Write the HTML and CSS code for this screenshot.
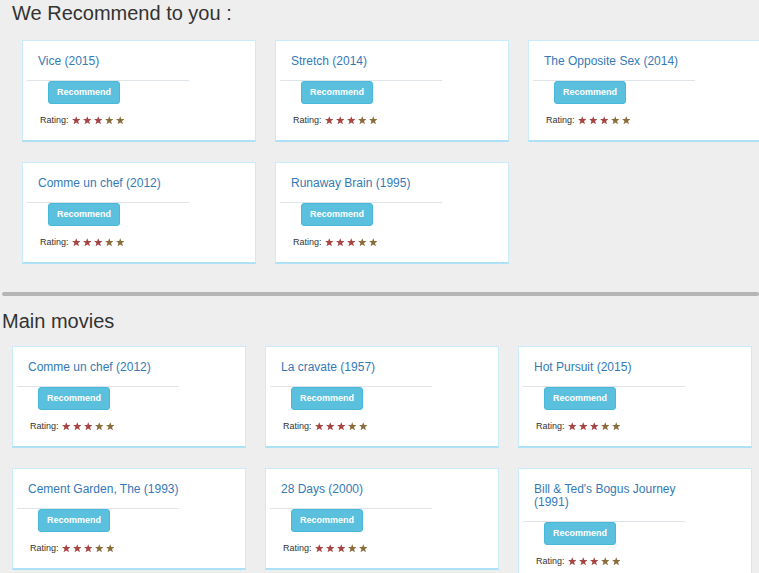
FILE: index.html
```html
<!DOCTYPE html>
<html lang="en">
<head>
<meta charset="utf-8">
<title>Movies</title>
<link rel="stylesheet" href="styles.css">
</head>
<body>
<svg width="0" height="0" class="defs" aria-hidden="true">
  <defs>
    <symbol id="star" viewBox="0 0 10 10">
      <polygon points="5,0.2 6.3,3.5 9.9,3.6 7.1,5.9 8.2,9.7 5,7.6 1.8,9.7 2.9,5.9 0.1,3.6 3.7,3.5"/>
    </symbol>
  </defs>
</svg>

<section class="recs">
  <h2 class="heading">We Recommend to you :</h2>
  <div class="grid">
    <div class="card">
      <h5 class="title">Vice (2015)</h5>
      <hr class="sep">
      <button class="btn">Recommend</button>
      <div class="rating">Rating: <span class="stars"><svg class="s red"><use href="#star"/></svg><svg class="s red"><use href="#star"/></svg><svg class="s red"><use href="#star"/></svg><svg class="s brown"><use href="#star"/></svg><svg class="s brown"><use href="#star"/></svg></span></div>
    </div>
    <div class="card">
      <h5 class="title">Stretch (2014)</h5>
      <hr class="sep">
      <button class="btn">Recommend</button>
      <div class="rating">Rating: <span class="stars"><svg class="s red"><use href="#star"/></svg><svg class="s red"><use href="#star"/></svg><svg class="s red"><use href="#star"/></svg><svg class="s brown"><use href="#star"/></svg><svg class="s brown"><use href="#star"/></svg></span></div>
    </div>
    <div class="card">
      <h5 class="title">The Opposite Sex (2014)</h5>
      <hr class="sep">
      <button class="btn">Recommend</button>
      <div class="rating">Rating: <span class="stars"><svg class="s red"><use href="#star"/></svg><svg class="s red"><use href="#star"/></svg><svg class="s red"><use href="#star"/></svg><svg class="s brown"><use href="#star"/></svg><svg class="s brown"><use href="#star"/></svg></span></div>
    </div>
    <div class="card">
      <h5 class="title">Comme un chef (2012)</h5>
      <hr class="sep">
      <button class="btn">Recommend</button>
      <div class="rating">Rating: <span class="stars"><svg class="s red"><use href="#star"/></svg><svg class="s red"><use href="#star"/></svg><svg class="s red"><use href="#star"/></svg><svg class="s brown"><use href="#star"/></svg><svg class="s brown"><use href="#star"/></svg></span></div>
    </div>
    <div class="card">
      <h5 class="title">Runaway Brain (1995)</h5>
      <hr class="sep">
      <button class="btn">Recommend</button>
      <div class="rating">Rating: <span class="stars"><svg class="s red"><use href="#star"/></svg><svg class="s red"><use href="#star"/></svg><svg class="s red"><use href="#star"/></svg><svg class="s brown"><use href="#star"/></svg><svg class="s brown"><use href="#star"/></svg></span></div>
    </div>
  </div>
</section>

<div class="divider"></div>

<section class="main">
  <h2 class="heading main-heading">Main movies</h2>
  <div class="grid">
    <div class="card">
      <h5 class="title">Comme un chef (2012)</h5>
      <hr class="sep">
      <button class="btn">Recommend</button>
      <div class="rating">Rating: <span class="stars"><svg class="s red"><use href="#star"/></svg><svg class="s red"><use href="#star"/></svg><svg class="s red"><use href="#star"/></svg><svg class="s brown"><use href="#star"/></svg><svg class="s brown"><use href="#star"/></svg></span></div>
    </div>
    <div class="card">
      <h5 class="title">La cravate (1957)</h5>
      <hr class="sep">
      <button class="btn">Recommend</button>
      <div class="rating">Rating: <span class="stars"><svg class="s red"><use href="#star"/></svg><svg class="s red"><use href="#star"/></svg><svg class="s red"><use href="#star"/></svg><svg class="s brown"><use href="#star"/></svg><svg class="s brown"><use href="#star"/></svg></span></div>
    </div>
    <div class="card">
      <h5 class="title">Hot Pursuit (2015)</h5>
      <hr class="sep">
      <button class="btn">Recommend</button>
      <div class="rating">Rating: <span class="stars"><svg class="s red"><use href="#star"/></svg><svg class="s red"><use href="#star"/></svg><svg class="s red"><use href="#star"/></svg><svg class="s brown"><use href="#star"/></svg><svg class="s brown"><use href="#star"/></svg></span></div>
    </div>
    <div class="card">
      <h5 class="title">Cement Garden, The (1993)</h5>
      <hr class="sep">
      <button class="btn">Recommend</button>
      <div class="rating">Rating: <span class="stars"><svg class="s red"><use href="#star"/></svg><svg class="s red"><use href="#star"/></svg><svg class="s red"><use href="#star"/></svg><svg class="s brown"><use href="#star"/></svg><svg class="s brown"><use href="#star"/></svg></span></div>
    </div>
    <div class="card">
      <h5 class="title">28 Days (2000)</h5>
      <hr class="sep">
      <button class="btn">Recommend</button>
      <div class="rating">Rating: <span class="stars"><svg class="s red"><use href="#star"/></svg><svg class="s red"><use href="#star"/></svg><svg class="s red"><use href="#star"/></svg><svg class="s brown"><use href="#star"/></svg><svg class="s brown"><use href="#star"/></svg></span></div>
    </div>
    <div class="card">
      <h5 class="title">Bill &amp; Ted's Bogus Journey (1991)</h5>
      <hr class="sep">
      <button class="btn">Recommend</button>
      <div class="rating">Rating: <span class="stars"><svg class="s red"><use href="#star"/></svg><svg class="s red"><use href="#star"/></svg><svg class="s red"><use href="#star"/></svg><svg class="s brown"><use href="#star"/></svg><svg class="s brown"><use href="#star"/></svg></span></div>
    </div>
  </div>
</section>
</body>
</html>
```

FILE: styles.css
```css
html, body {
  overflow: hidden;
}

body {
  margin: 0;
  background: #eeeeee;
  font-family: "Liberation Sans", Arial, sans-serif;
  color: #333333;
}

.defs {
  position: absolute;
  width: 0;
  height: 0;
}

.heading {
  margin: 1px 0 15px 0;
  font-size: 20px;
  line-height: 24px;
  font-weight: normal;
  color: #333333;
}

.main-heading {
  margin: 0 0 13px 0;
}

.recs {
  padding-left: 12px;
}

.main {
  padding-left: 2px;
}

.grid {
  display: grid;
  grid-template-columns: repeat(3, 234px);
  column-gap: 19px;
  row-gap: 20px;
  align-items: start;
  margin-left: 10px;
}

.card {
  background: #ffffff;
  border: 1px solid #c9ebfb;
  border-bottom: 2px solid #aee0f6;
  padding-bottom: 15px;
}

.title {
  margin: 14px 0 0 15px;
  max-width: 165px;
  font-size: 12px;
  line-height: 13px;
  font-weight: normal;
  color: #337ab7;
}

.sep {
  width: 70%;
  margin: 12px 0 0 4px;
  border: 0;
  border-top: 1px solid #dfe4e8;
  height: 0;
}

.btn {
  display: block;
  margin: 0 0 0 25px;
  height: 23px;
  padding: 0 8px;
  background: #5bc0de;
  border: 1px solid #46b8da;
  border-radius: 3px;
  color: #ffffff;
  font-family: "Liberation Sans", Arial, sans-serif;
  font-size: 9px;
  font-weight: bold;
  line-height: 21px;
}

.rating {
  display: flex;
  align-items: center;
  margin: 11px 0 0 17px;
  height: 10px;
  font-size: 9px;
  color: #333333;
}

.stars {
  display: flex;
  margin-left: 3px;
  gap: 2.5px;
}

.s {
  width: 8.5px;
  height: 8.5px;
}

.red {
  fill: #a94442;
}

.brown {
  fill: #8a6d3b;
}

.divider {
  height: 4px;
  margin: 28px 0 13px 2px;
  background: #b5b5b5;
  border-radius: 2px;
}
```
